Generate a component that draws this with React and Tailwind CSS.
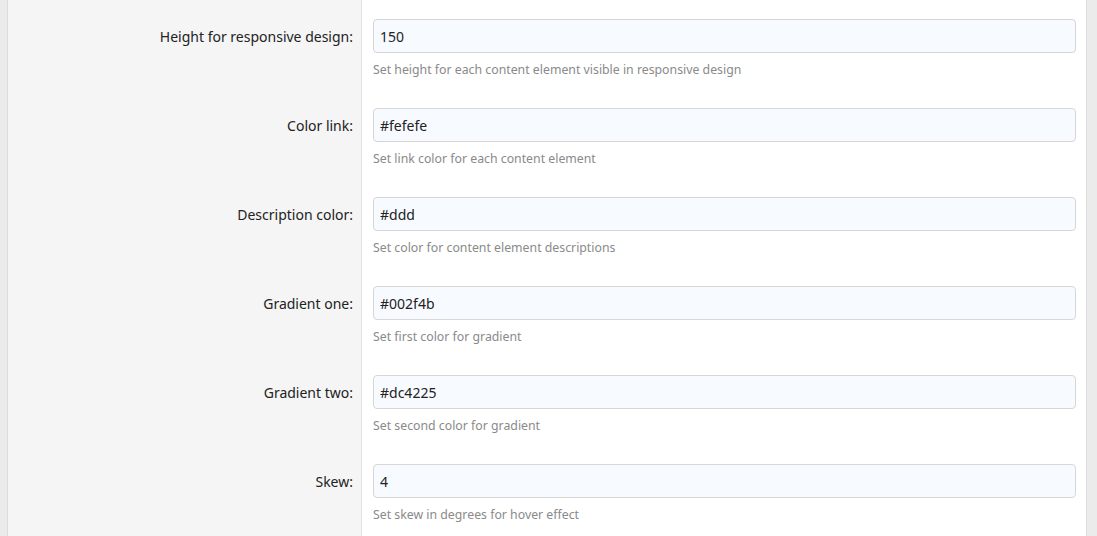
const fields = [
  {
    label: "Height for responsive design:",
    value: "150",
    help: "Set height for each content element visible in responsive design",
  },
  { label: "Color link:", value: "#fefefe", help: "Set link color for each content element" },
  { label: "Description color:", value: "#ddd", help: "Set color for content element descriptions" },
  { label: "Gradient one:", value: "#002f4b", help: "Set first color for gradient" },
  { label: "Gradient two:", value: "#dc4225", help: "Set second color for gradient" },
  { label: "Skew:", value: "4", help: "Set skew in degrees for hover effect" },
];

const App = () => {
  return (
    <div
      className="w-full h-[536px] overflow-hidden bg-[#ebebeb] flex"
      style={{ fontFamily: '"Segoe UI", "Noto Sans", "Liberation Sans", sans-serif' }}
    >
      <div className="ml-[7px] w-[1080px] h-full border-x border-[#dcdcdc] flex flex-col">
        {fields.map((f) => (
          <div key={f.label} className="flex h-[89px] shrink-0">
            {/* Label column */}
            <div className="w-[354px] shrink-0 bg-[#f5f5f5] border-r border-[#e3e3e3] pt-[19px] pr-[8px] flex justify-end">
              <label className="h-[34px] flex items-center text-[14px] text-[#222]">
                {f.label}
              </label>
            </div>

            {/* Field column */}
            <div className="flex-1 bg-white pt-[19px] pl-[11px] pr-[10px]">
              <input
                type="text"
                defaultValue={f.value}
                className="w-full h-[34px] px-[6px] rounded-[4px] border border-[#d6d6d6] bg-[#f7fbff] text-[14px] text-[#222] outline-none"
              />
              <p className="mt-[8px] text-[12.3px] text-[#8a8a8a] leading-[18px]">{f.help}</p>
            </div>
          </div>
        ))}
        <div className="flex flex-1">
          <div className="w-[354px] shrink-0 bg-[#f5f5f5] border-r border-[#e3e3e3]" />
          <div className="flex-1 bg-white" />
        </div>
      </div>
    </div>
  );
};

export default App;
